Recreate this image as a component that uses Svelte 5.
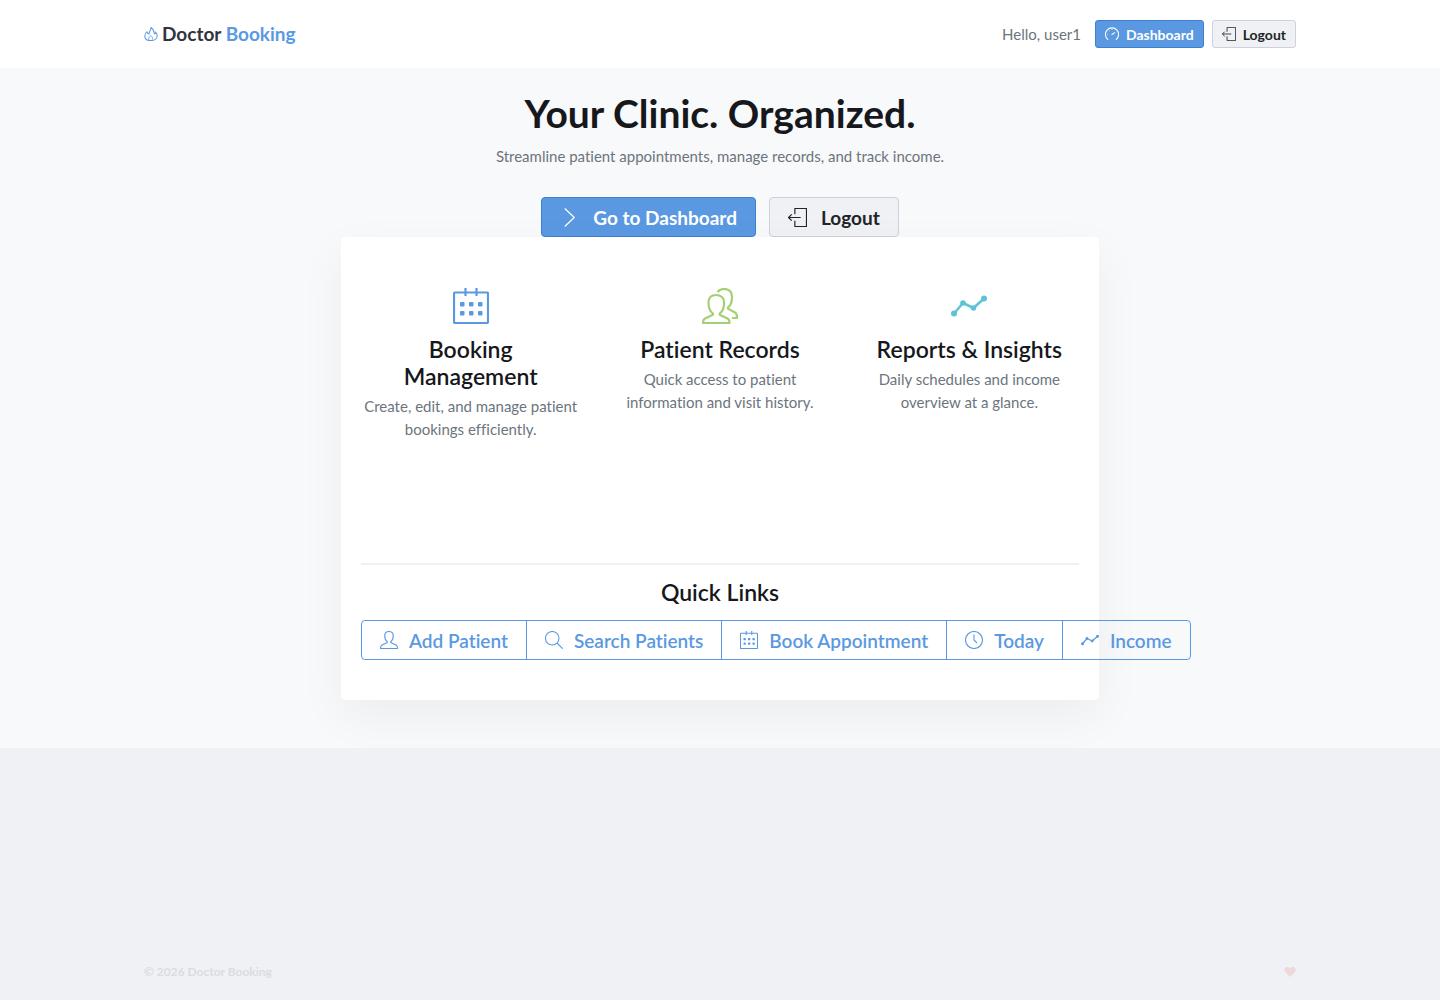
<script lang="ts">
  const user = 'user1';
  const year = 2026;

  const features = [
    {
      icon: 'calendar',
      tone: 'blue',
      title: 'Booking Management',
      text: 'Create, edit, and manage patient bookings efficiently.'
    },
    {
      icon: 'users',
      tone: 'green',
      title: 'Patient Records',
      text: 'Quick access to patient information and visit history.'
    },
    {
      icon: 'graph',
      tone: 'teal',
      title: 'Reports & Insights',
      text: 'Daily schedules and income overview at a glance.'
    }
  ];

  const links = [
    { icon: 'user', label: 'Add Patient', href: '#add-patient' },
    { icon: 'search', label: 'Search Patients', href: '#patients' },
    { icon: 'calendar', label: 'Book Appointment', href: '#book' },
    { icon: 'clock', label: 'Today', href: '#today' },
    { icon: 'graph', label: 'Income', href: '#income' }
  ];
</script>

{#snippet icon(name: string, size: number)}
  <svg width={size} height={size} viewBox="0 0 36 36" fill="none" stroke="currentColor" stroke-width="2.2" stroke-linejoin="round" aria-hidden="true">
    {#if name === 'calendar'}
      <rect x="1" y="4.5" width="34" height="30.5" rx="1" />
      <path d="M12.5 0v8M23.5 0v8" />
      <g fill="currentColor" stroke="none">
        {#each [7, 16, 25] as x}
          <rect {x} y="14" width="4.5" height="4.5" rx="1" />
          <rect {x} y="23" width="4.5" height="4.5" rx="1" />
        {/each}
      </g>
    {:else if name === 'users'}
      <path d="M14 7c-5 0-7.5 3-7.5 7.5 0 5 1 8.5 4.2 10.8.6.5.5 1.2-.2 1.6L3 30.500c-1.500.8-2 1.500-2 4.500h26.500c0-2.500-.4-3.700-2-4.500l-7.400-3.600c-.7-.4-.8-1.100-.2-1.600 3.200-2.300 4.200-5.800 4.200-10.800C22.100 10 19 7 14 7z" />
      <path d="M15.5 4C17 2 19.5 1 22 1c5 0 8 3 8 8 0 4.500-.6 7.800-3.800 10.300-.6.500-.5 1.200.2 1.600l6.600 3.600c1.600.9 2.200 2 2 5.500h-5" />
    {:else if name === 'user'}
      <path d="M18 1c-5.500 0-8.500 3.500-8.500 8.500 0 5.500 1.200 9 4.600 11.500.8.600.8 1.800-.2 2.300L4 28c-2.200 1.200-3 3-3 7h34c0-4-.8-5.800-3-7l-9.900-4.700c-1-.5-1-1.700-.2-2.300 3.400-2.500 4.600-6 4.600-11.500C26.500 4.500 23.500 1 18 1z" />
    {:else if name === 'graph'}
      <path d="M3 25.5 12 15l10.500 5L33 10.5" stroke-width="2.5" />
      <g fill="currentColor" stroke="none">
        <circle cx="3" cy="25.5" r="3" />
        <circle cx="12" cy="15" r="2.8" />
        <circle cx="22.5" cy="20" r="2.8" />
        <circle cx="33" cy="10.5" r="3" />
      </g>
    {:else if name === 'search'}
      <circle cx="14.5" cy="14.5" r="13.5" />
      <path d="M24 24l11.5 11.5" />
    {:else if name === 'clock'}
      <circle cx="18" cy="18" r="17" />
      <path d="M18 7v11l6 6" />
    {:else if name === 'exit'}
      <path d="M13 12V1h22v34H13V24M1 18h23M7 12l-6 6 6 6" />
    {:else if name === 'chevron'}
      <path d="M9 1l18 17L9 35" />
    {:else if name === 'gauge'}
      <path stroke-width="2.6" d="M8 33a17 17 0 1 1 20 0M17 20l9-6" />
      <path d="M18 5v2M6 19h2M10 10l1 1" />
    {:else if name === 'fire'}
      <path stroke-width="2.6" d="M18 1c1 7-5 10-5 17-2 0-4-2-5-6-4 3-6 7-6 11 0 7 6 12 15 12 10 0 17-5 17-12 0-4-1-7-4-10 0 3-1 5-3 5C26 11 24 5 18 1z" />
      <path d="M13 34c-3-4 1-9 4-12 4 3 8 8 4 12" />
    {:else if name === 'heart'}
      <path fill="currentColor" stroke="none" d="M18 33 3 18C-2 12 2 3 10 3c4 0 7 2 8 5 1-3 4-5 8-5 8 0 12 9 7 15z" />
    {/if}
  </svg>
{/snippet}

<div class="page">
  <header>
    <div class="container bar">
      <a class="brand" href="#home">
        {@render icon('fire', 14)}
        <span>Doctor <b>Booking</b></span>
      </a>
      <nav>
        <span class="hello">Hello, {user}</span>
        <a class="btn small primary" href="#dashboard">{@render icon('gauge', 14)} Dashboard</a>
        <button class="btn small" type="button">{@render icon('exit', 14)} Logout</button>
      </nav>
    </div>
  </header>

  <main>
    <h1>Your Clinic. Organized.</h1>
    <p class="lead">Streamline patient appointments, manage records, and track income.</p>
    <div class="actions">
      <a class="btn primary" href="#dashboard">{@render icon('chevron', 19)} Go to Dashboard</a>
      <button class="btn" type="button">{@render icon('exit', 19)} Logout</button>
    </div>

    <section class="card">
      <div class="features">
        {#each features as feature}
          <article>
            <div class="feature-icon {feature.tone}">{@render icon(feature.icon, 36)}</div>
            <h2>{feature.title}</h2>
            <p>{feature.text}</p>
          </article>
        {/each}
      </div>
      <hr />
      <h2>Quick Links</h2>
      <div class="links">
        {#each links as link}
          <a href={link.href}>{@render icon(link.icon, 18)} {link.label}</a>
        {/each}
      </div>
    </section>
  </main>

  <footer>
    <div class="container bar">
      <span>&copy; {year} Doctor Booking</span>
      <span class="heart">{@render icon('heart', 12)}</span>
    </div>
  </footer>
</div>

<style>
  :global(body) {
    margin: 0;
    background: #f0f1f5;
  }

  .page {
    min-height: 100vh;
    display: flex;
    flex-direction: column;
    font-family: Lato, 'Open Sans', sans-serif;
    font-size: 15px;
    font-variant-ligatures: none;
    color: #16181b;
  }

  svg {
    display: block;
    flex: none;
  }

  a {
    color: inherit;
    text-decoration: none;
  }

  .container {
    width: 80%;
    margin: 0 auto;
  }

  .bar {
    display: flex;
    align-items: center;
    justify-content: space-between;
  }

  header {
    background: #fff;
    padding: 20px 0;
  }

  .brand {
    display: flex;
    align-items: center;
    gap: 4px;
    font-size: 19px;
    line-height: 28px;
    font-weight: 700;
    color: #31343d;
  }

  .brand svg,
  .brand b {
    color: #5a99e2;
  }

  .brand b {
    font-weight: 700;
  }

  nav {
    display: flex;
    align-items: center;
    gap: 8px;
  }

  .hello {
    margin-right: 6px;
    color: #6c757d;
  }

  .btn {
    box-sizing: border-box;
    height: 40px;
    display: inline-flex;
    align-items: center;
    gap: 14px;
    padding: 0 18px;
    border: 1px solid #cdd0de;
    border-radius: 4px;
    background: #f0f1f5;
    color: #212529;
    font-family: inherit;
    font-size: 19px;
    font-weight: 700;
    white-space: nowrap;
    cursor: pointer;
  }

  .btn.small {
    height: 28px;
    gap: 7px;
    padding: 0 9px;
    border-radius: 3px;
    font-size: 14px;
  }

  .btn.primary {
    background: #5a99e2;
    border-color: #3d80cf;
    color: #fff;
  }

  main {
    display: flex;
    flex-direction: column;
    align-items: center;
    padding: 22px 20px 48px;
    background: #f8f9fb;
  }

  h1 {
    margin: 0;
    font-size: 39px;
    line-height: 46px;
    font-weight: 700;
  }

  .lead {
    margin: 9px 0 29px;
    line-height: 23px;
    color: #6c757d;
  }

  .actions {
    display: flex;
    gap: 13px;
  }

  .card {
    box-sizing: border-box;
    width: 100%;
    max-width: 758px;
    padding: 51px 20px 40px;
    border-radius: 4px;
    background: #fff;
    box-shadow: 0 16px 48px rgba(0, 0, 0, 0.05);
    text-align: center;
  }

  .features {
    min-height: 275px;
    display: grid;
    grid-template-columns: repeat(3, 1fr);
    gap: 30px;
  }

  .feature-icon {
    display: flex;
    justify-content: center;
    margin-bottom: 12px;
  }

  .blue {
    color: #5a99e2;
  }

  .green {
    color: #a5cf73;
  }

  .teal {
    color: #5fc3d7;
  }

  h2 {
    margin: 0;
    font-size: 23px;
    line-height: 27px;
    font-weight: 600;
  }

  article p {
    margin: 5px 0 0;
    line-height: 23px;
    color: #6c757d;
  }

  hr {
    height: 2px;
    margin: 0 0 14px;
    border: 0;
    background: #f0f1f5;
  }

  .links {
    display: flex;
    margin-top: 14px;
  }

  .links a {
    box-sizing: border-box;
    height: 40px;
    flex: none;
    display: flex;
    align-items: center;
    gap: 11px;
    padding: 0 18px;
    border: 1px solid #5a99e2;
    color: #5a99e2;
    font-size: 19px;
    font-weight: 600;
    white-space: nowrap;
  }

  .links a + a {
    margin-left: -1px;
  }

  .links a:first-child {
    border-radius: 4px 0 0 4px;
  }

  .links a:last-child {
    border-radius: 0 4px 4px 0;
  }

  footer {
    margin-top: auto;
    padding: 20px 0;
    font-size: 12px;
    line-height: 16px;
    font-weight: 700;
    color: #dbdce0;
  }

  .heart {
    color: #eed8da;
  }
</style>
